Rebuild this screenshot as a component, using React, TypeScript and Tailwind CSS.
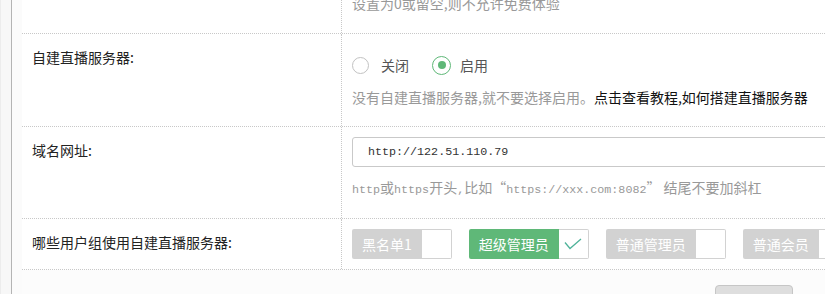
import { ReactNode } from 'react';

const mono = "font-['Liberation_Mono','Noto_Sans_CJK_SC',monospace] text-[11.7px]";

const Row = ({ label, children, className = '' }: { label?: string; children: ReactNode; className?: string }) => (
  <div className={`flex border-b border-dotted border-[#c8c8c8] ${className}`}>
    <div className="w-[320px] shrink-0 border-r border-dotted border-[#c8c8c8] pl-[10px] pt-[13px] text-[#222]">{label}</div>
    <div className="flex-1 pl-[10px]">{children}</div>
  </div>
);

const Radio = ({ label, checked }: { label: string; checked?: boolean }) => (
  <label className={`flex items-center cursor-pointer ${checked ? 'gap-[9px]' : 'gap-[12px] mr-[23px]'}`}>
    <span
      className={`flex items-center justify-center rounded-full border ${
        checked ? 'h-[19px] w-[19px] border-[1.5px] border-[#5fb878]' : 'h-[17px] w-[17px] border-[#c2c2c2]'
      }`}
    >
      {checked && <span className="h-[8px] w-[8px] rounded-full bg-[#5fb878]" />}
    </span>
    <span className="text-[#555]">{label}</span>
  </label>
);

const GroupCheck = ({ name, checked }: { name: string; checked?: boolean }) => (
  <div className="mr-[17px] flex h-[30px] shrink-0">
    <span
      className={`flex items-center rounded-l-[2px] px-[10px] text-white ${checked ? 'bg-[#5fb878]' : 'bg-[#d2d2d2]'}`}
    >
      {name}
    </span>
    <span className="flex w-[30px] items-center justify-center rounded-r-[2px] border border-l-0 border-[#d2d2d2] bg-white">
      {checked && (
        <svg width="18" height="12" viewBox="0 0 18 12" fill="none">
          <path d="M1 4.5 L6 10.5 L17 1" stroke="#4fb39a" strokeWidth="1.3" />
        </svg>
      )}
    </span>
  </div>
);

export default function App() {
  return (
    <div className="flex h-[294px] w-[825px] overflow-hidden bg-[#fcfcfc] font-['Noto_Sans_CJK_SC',sans-serif] text-[14px] leading-[20px]">
      <div className="w-[11px] shrink-0 border-l border-[#ececec] bg-[#f7f7f7]" />
      <div className="w-[1px] shrink-0 bg-[#b4b4b4]" />
      <div className="w-[10px] shrink-0 bg-[#fbfbfb]" />
      <div className="flex min-w-0 flex-1 flex-col">
        <div className="bg-white">
          <Row className="h-[34px] overflow-hidden">
            <div className="flex h-full flex-col justify-end pb-[20px] text-[#999]">设置为0或留空,则不允许免费体验</div>
          </Row>
          <Row label="自建直播服务器:">
            <div className="pb-[19px] pt-[16px]">
              <div className="flex h-[30px] items-center">
                <Radio label="关闭" />
                <Radio label="启用" checked />
              </div>
              <div className="mt-[7px] whitespace-nowrap text-[#999]">
                没有自建直播服务器,就不要选择启用。<span className="text-[#111]">点击查看教程,如何搭建直播服务器</span>
              </div>
            </div>
          </Row>
          <Row label="域名网址:">
            <div className="pb-[18px] pt-[10px]">
              <input
                readOnly
                value="http://122.51.110.79"
                className={`block h-[30px] w-[520px] rounded-l-[3px] border border-[#c9c9c9] bg-white pl-[15px] text-[#333] outline-none ${mono}`}
              />
              <div className="mt-[10px] whitespace-nowrap text-[#999]">
                <span className={mono}>http</span>或<span className={mono}>https</span>开头
                <span className={mono}>,</span>比如“<span className={mono}>https://xxx.com:8082</span>” 结尾不要加斜杠
              </div>
            </div>
          </Row>
          <Row label="哪些用户组使用自建直播服务器:">
            <div className="flex py-[10px]">
              <GroupCheck name="黑名单1" />
              <GroupCheck name="超级管理员" checked />
              <GroupCheck name="普通管理员" />
              <GroupCheck name="普通会员" />
            </div>
          </Row>
        </div>
        <div className="pl-[693px] pt-[15px]">
          <button className="h-[30px] w-[78px] rounded-[4px] border border-[#c6c6c6] bg-[#dedede]" />
        </div>
      </div>
    </div>
  );
}
